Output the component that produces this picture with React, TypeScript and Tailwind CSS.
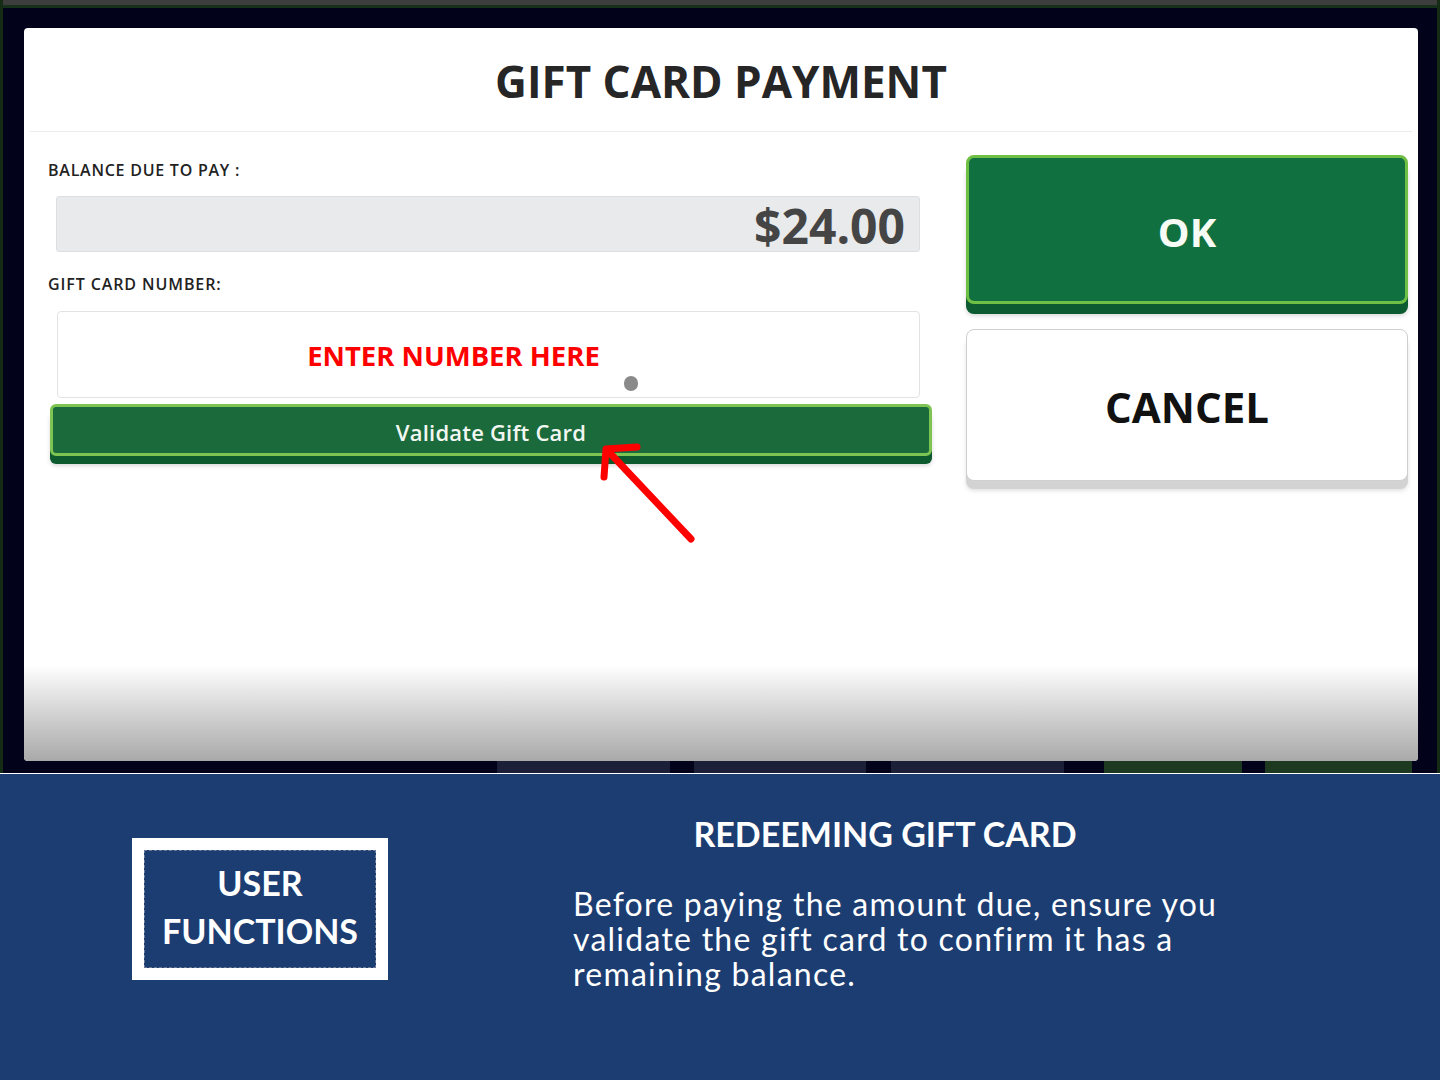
import React from "react";

export default function App() {
  return (
    <div className="relative w-[1440px] h-[1080px] overflow-hidden flex flex-col bg-[#1c3d72]">
      {/* screenshot area */}
      <div className="h-[773px] flex flex-col bg-[#02031a] border-l-[3px] border-r-[3px] border-[#142b14]">
        <div className="h-[5px] bg-[#3d3d3d]" />
        <div className="h-[3px] bg-[#16301a]" />
        <div className="flex-1 flex flex-col pl-[21px] pr-[19px] pt-[20px]">
          {/* modal */}
          <div className="h-[733px] bg-white rounded-[4px] flex flex-col overflow-hidden font-['Open_Sans',sans-serif]">
            <div className="h-[104px] shrink-0 flex items-center justify-center border-b border-[#ececec] mx-[6px]">
              <h1 className="text-[44px] font-bold text-[#262626] tracking-[0px] leading-none mt-[2px]">GIFT CARD PAYMENT</h1>
            </div>
            <div className="flex-1 flex pl-[24px] pr-[10px]">
              {/* left column */}
              <div className="w-[884px] flex flex-col">
                <div className="mt-[28px] h-[20px] flex items-center text-[16px] font-semibold text-[#222] tracking-[0.75px]">BALANCE DUE TO PAY :</div>
                <div className="ml-[8px] mt-[16px] w-[864px] h-[56px] bg-[#e8eaec] border border-[#dcdfe2] rounded-[3px] flex items-center justify-end pr-[14px]">
                  <span className="text-[48px] font-bold text-[#454545] leading-none mt-[3px]">$24.00</span>
                </div>
                <div className="mt-[22px] h-[20px] flex items-center text-[16px] font-semibold text-[#222] tracking-[0.9px]">GIFT CARD NUMBER:</div>
                <div className="relative ml-[9px] mt-[17px] w-[863px] h-[87px] bg-white border border-[#e3e3e3] rounded-[4px] flex justify-center">
                  <span className="mt-[30px] text-[27.5px] font-bold text-[#ff0000] leading-none tracking-[0px] ml-[-70px]">ENTER NUMBER HERE</span>
                  <div className="absolute left-[566px] top-[64px] w-[14px] h-[15px] rounded-full bg-[#8a8a8a]" />
                </div>
                <div className="ml-[2px] mt-[6px] w-[882px] h-[52px] bg-[#1a6a3b] border-[3px] border-[#7ec452] rounded-[6px] shadow-[0_8px_0_#0c5a2d,0_10px_4px_rgba(0,0,0,0.15)] flex items-center justify-center">
                  <span className="text-[22px] font-semibold text-[#f2f7f2] leading-none mt-[4px] tracking-[0.2px]">Validate Gift Card</span>
                </div>
              </div>
              {/* right column */}
              <div className="ml-[34px] w-[442px] flex flex-col">
                <div className="mt-[23px] h-[149px] bg-[#117040] border-[3px] border-[#6fbf44] rounded-[8px] shadow-[0_10px_0_#0d5b30,0_12px_4px_rgba(0,0,0,0.15)] flex items-center justify-center">
                  <span className="text-[40px] font-bold text-[#f7fbf5] leading-none mt-[4px]">OK</span>
                </div>
                <div className="mt-[25px] h-[152px] bg-white border border-[#cfcfcf] rounded-[8px] shadow-[0_8px_0_#d3d3d3,0_10px_4px_rgba(0,0,0,0.12)] flex items-center justify-center">
                  <span className="text-[42px] font-bold text-[#111] leading-none mt-[4px]">CANCEL</span>
                </div>
              </div>
            </div>
            <div className="h-[96px] shrink-0 bg-linear-to-b from-white to-[#a9a9a9]" />
          </div>
          {/* strip below modal */}
          <div className="h-[12px] flex">
            <div className="ml-[473px] w-[173px] bg-[#1b2038]" />
            <div className="ml-[24px] w-[172px] bg-[#1b2038]" />
            <div className="ml-[25px] w-[173px] bg-[#1b2038]" />
            <div className="ml-[40px] w-[138px] bg-[#1d3a20]" />
            <div className="ml-[23px] w-[147px] bg-[#1d3a20]" />
          </div>
        </div>
      </div>
      <div className="h-[1px] bg-white" />
      {/* blue panel */}
      <div className="flex-1 flex font-['Lato',sans-serif] text-white">
        <div className="ml-[132px] mt-[64px] w-[256px] h-[142px] border-[12px] border-white self-start">
          <div className="w-full h-full border border-dashed border-[#6b7a95] flex flex-col items-center justify-center">
            <div className="text-[34px] font-bold leading-[48px] mt-[-5px]">USER</div>
            <div className="text-[34px] font-bold leading-[48px]">FUNCTIONS</div>
          </div>
        </div>
        <div className="ml-[185px] mt-[38px] w-[720px] flex flex-col">
          <div className="w-[624px] text-center text-[34px] font-bold leading-[44px]">REDEEMING GIFT CARD</div>
          <p className="mt-[30px] text-[32px] leading-[35px] font-normal tracking-[1.25px]">
            Before paying the amount due, ensure you<br />validate the gift card to confirm it has a<br />remaining balance.
          </p>
        </div>
      </div>
      {/* red arrow annotation */}
      <svg className="absolute left-0 top-0 pointer-events-none" width="1440" height="1080" viewBox="0 0 1440 1080">
        <g stroke="#ff0000" strokeWidth="7" strokeLinecap="round" strokeLinejoin="round" fill="none">
          <line x1="691" y1="539" x2="608" y2="451" />
          <polyline points="637,447 606,449 604,477" />
        </g>
      </svg>
    </div>
  );
}
